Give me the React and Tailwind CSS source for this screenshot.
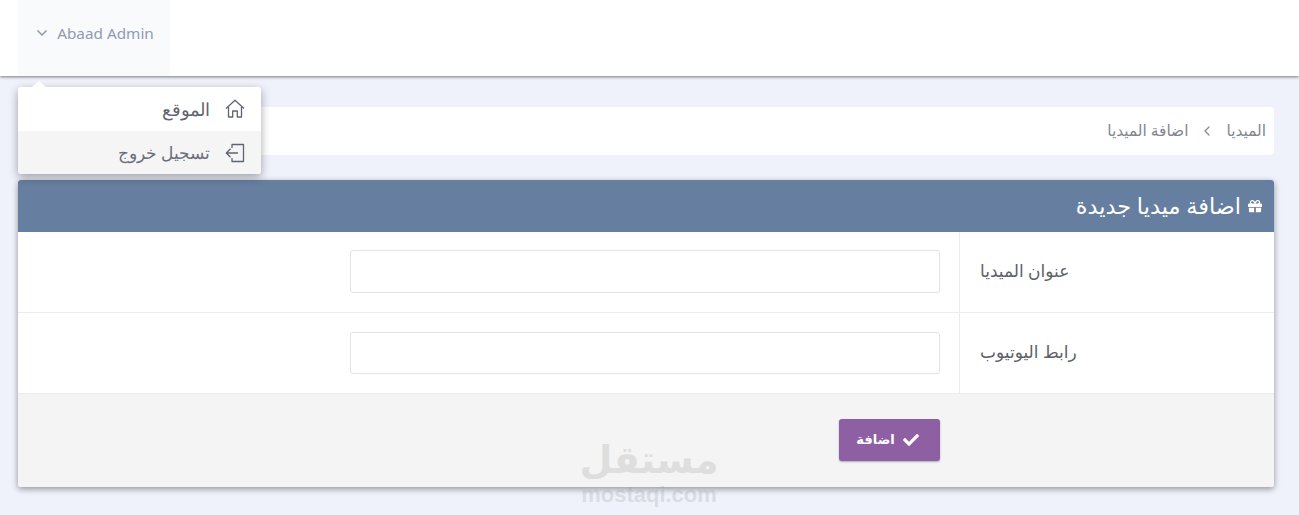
import { ChevronDown, ChevronRight } from 'lucide-react';
import { FaCheck, FaGift } from 'react-icons/fa';

const FONT = "font-['Noto_Sans','DejaVu_Sans',sans-serif]";

const FIELDS = [
  { label: 'عنوان الميديا', labelClass: 'pb-[2px]', fieldClass: 'pb-[2px]', inputClass: 'h-[43px]' },
  { label: 'رابط اليوتيوب', labelClass: 'pb-[3px]', fieldClass: '', inputClass: 'h-[42px]' },
];

const HomeIcon = () => (
  <svg width="20" height="20" viewBox="0 0 20 20" fill="none" stroke="#5f6472" strokeWidth="1.3" strokeLinejoin="round">
    <path d="M1 9.5 10 1.2l9 8.3" />
    <path d="M3.5 8v10h4.2v-6h4.6v6h4.2V8" />
  </svg>
);

const LogoutIcon = () => (
  <svg width="20" height="20" viewBox="0 0 20 20" fill="none" stroke="#5f6472" strokeWidth="1.3" strokeLinejoin="round">
    <path d="M7 5V1.5h11.5v17H7V15" />
    <path d="M13 10H1.5M5.5 5.8 1.3 10l4.2 4.2" />
  </svg>
);

const UserMenu = () => (
  <div className="absolute left-[18px] top-[87px] z-20 w-[243px] rounded-[3px] bg-white shadow-[0_3px_10px_rgba(0,0,0,0.35)]" dir="rtl">
    <div className="absolute -top-[6px] left-[14px] h-0 w-0 border-x-[7px] border-b-[6px] border-x-transparent border-b-white" />
    <div className="flex h-[44px] items-center gap-[15px] pr-[16px] text-[18px] font-light text-[#5f6472]">
      <HomeIcon />
      <span>الموقع</span>
    </div>
    <div className="flex h-[43px] items-center gap-[15px] rounded-b-[3px] bg-[#f5f5f5] pr-[16px] text-[17.3px] font-light text-[#6b6f7b]">
      <LogoutIcon />
      <span>تسجيل خروج</span>
    </div>
  </div>
);

const App = () => {
  return (
    <div className={`relative h-[515px] overflow-hidden bg-[#eff2fb] ${FONT}`}>
      {/* شريط علوي */}
      <header className="relative z-10 h-[76px] bg-white pl-[18px] shadow-[0_1px_3px_rgba(0,0,0,0.5)]">
        <div className="flex h-full w-[152px] items-center justify-center gap-[7px] bg-[#f9fafc] pb-[10px] text-[15.3px] text-[#8f9bb3]">
          <ChevronDown size={16} strokeWidth={2.5} />
          <span>Abaad Admin</span>
        </div>
      </header>

      <UserMenu />

      <main className="pl-[18px] pr-[25px] pt-[31px]" dir="rtl">
        {/* مسار التنقل */}
        <nav className="flex h-[48px] items-center gap-[11px] rounded-[4px] bg-white pr-[8px] text-[15.4px] text-[#7f8591]">
          <span>الميديا</span>
          <ChevronRight size={16} className="rotate-180 text-[#8a8f9a]" />
          <span>اضافة الميديا</span>
        </nav>

        {/* النموذج */}
        <section className="mt-[25px] rounded-[3px] bg-white shadow-[0_2px_6px_rgba(0,0,0,0.4)]">
          <div className="flex h-[52px] items-center gap-[7px] rounded-t-[3px] bg-[#667ea0] pr-[12px] text-[22.4px] text-white">
            <FaGift size={14} />
            <span>اضافة ميديا جديدة</span>
          </div>

          {FIELDS.map((field) => (
            <div key={field.label} className="flex h-[81px] border-b border-[#ececec]">
              <label className={`flex w-[315px] items-center justify-end border-l border-[#ececec] pl-[20px] text-[17px] text-[#5c5f68] ${field.labelClass}`}>
                {field.label}
              </label>
              <div className={`flex flex-1 items-center pr-[19px] ${field.fieldClass}`}>
                <input className={`w-[590px] rounded-[3px] border border-[#e2e3e6] bg-white ${field.inputClass}`} />
              </div>
            </div>
          ))}

          <div className="h-[93px] rounded-b-[3px] bg-[#f4f4f4] pr-[334px] pt-[25px]">
            <button className="flex h-[42px] w-[101px] items-center justify-center gap-[8px] rounded-[3px] bg-[#8f5fa3] pr-[4px] text-[13px] font-bold text-white shadow-[0_1px_2px_rgba(0,0,0,0.3)]">
              <FaCheck size={16} />
              <span>اضافة</span>
            </button>
          </div>
        </section>
      </main>

      {/* علامة مائية */}
      <div className="pointer-events-none absolute left-[581px] top-[436px] z-20 flex w-[136px] flex-col items-center gap-[4px] text-[#8a8a8a] opacity-20">
        <span className="text-[38px] font-bold leading-[44px]" dir="rtl">مستقل</span>
        <span className="font-['Liberation_Sans',sans-serif] text-[22px] font-bold leading-[22px]">mostaqi.com</span>
      </div>
    </div>
  );
};

export default App;
